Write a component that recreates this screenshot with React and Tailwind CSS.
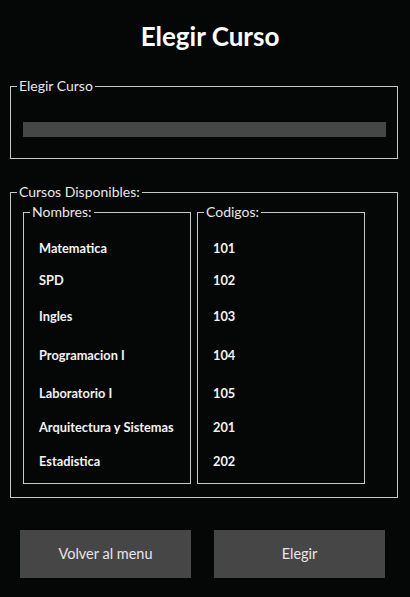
import React from "react";

const rows = [
  ["Matematica", "101", "mt-[20px]"],
  ["SPD", "102", "mt-[16px]"],
  ["Ingles", "103", "mt-[20px]"],
  ["Programacion I", "104", "mt-[23px]"],
  ["Laboratorio I", "105", "mt-[22px]"],
  ["Arquitectura y Sistemas", "201", "mt-[18px]"],
  ["Estadistica", "202", "mt-[18px]"],
];

function Col({ title, idx }) {
  return (
    <fieldset className="w-[168px] border border-[#c8c8c8] pl-[15px] pb-[14px]">
      <legend className="-ml-[9px] px-[2px] text-[14px] leading-[16px] text-[#e8e8e8]">{title}</legend>
      {rows.map((r) => (
        <div key={r[0]} className={`${r[2]} h-[16px] leading-[16px] text-[12.8px] font-bold text-[#f2f2f2]`}>
          {r[idx]}
        </div>
      ))}
    </fieldset>
  );
}

export default function App() {
  return (
    <div
      className="w-[410px] h-[597px] bg-[#050707] pl-[10px] overflow-hidden"
      style={{ fontFamily: "Lato, 'Open Sans', sans-serif" }}
    >
      <h1 className="pt-[20px] h-[52px] text-center text-[26px] leading-[32px] font-bold text-white">
        Elegir Curso
      </h1>
      <fieldset className="mt-[26px] w-[388px] border border-[#c8c8c8] pl-[12px] pr-[11px] pb-[21px]">
        <legend className="-ml-[6px] px-[2px] text-[14px] leading-[16px] text-[#e8e8e8]">Elegir Curso</legend>
        <div className="mt-[28px] h-[15px] bg-[#464646]" />
      </fieldset>
      <fieldset className="mt-[25px] w-[388px] border border-[#c8c8c8] pl-[12px] pb-[13px]">
        <legend className="-ml-[6px] px-[2px] text-[14px] leading-[16px] text-[#e8e8e8]">Cursos Disponibles:</legend>
        <div className="mt-[4px] flex gap-[6px]">
          <Col title="Nombres:" idx={0} />
          <Col title="Codigos:" idx={1} />
        </div>
      </fieldset>
      <div className="mt-[32px] pl-[10px] flex gap-[23px]">
        <button className="w-[171px] h-[48px] bg-[#464646] text-[14.5px] text-[#e6e6e6]">Volver al menu</button>
        <button className="w-[171px] h-[48px] bg-[#464646] text-[14.5px] text-[#e6e6e6]">Elegir</button>
      </div>
    </div>
  );
}
